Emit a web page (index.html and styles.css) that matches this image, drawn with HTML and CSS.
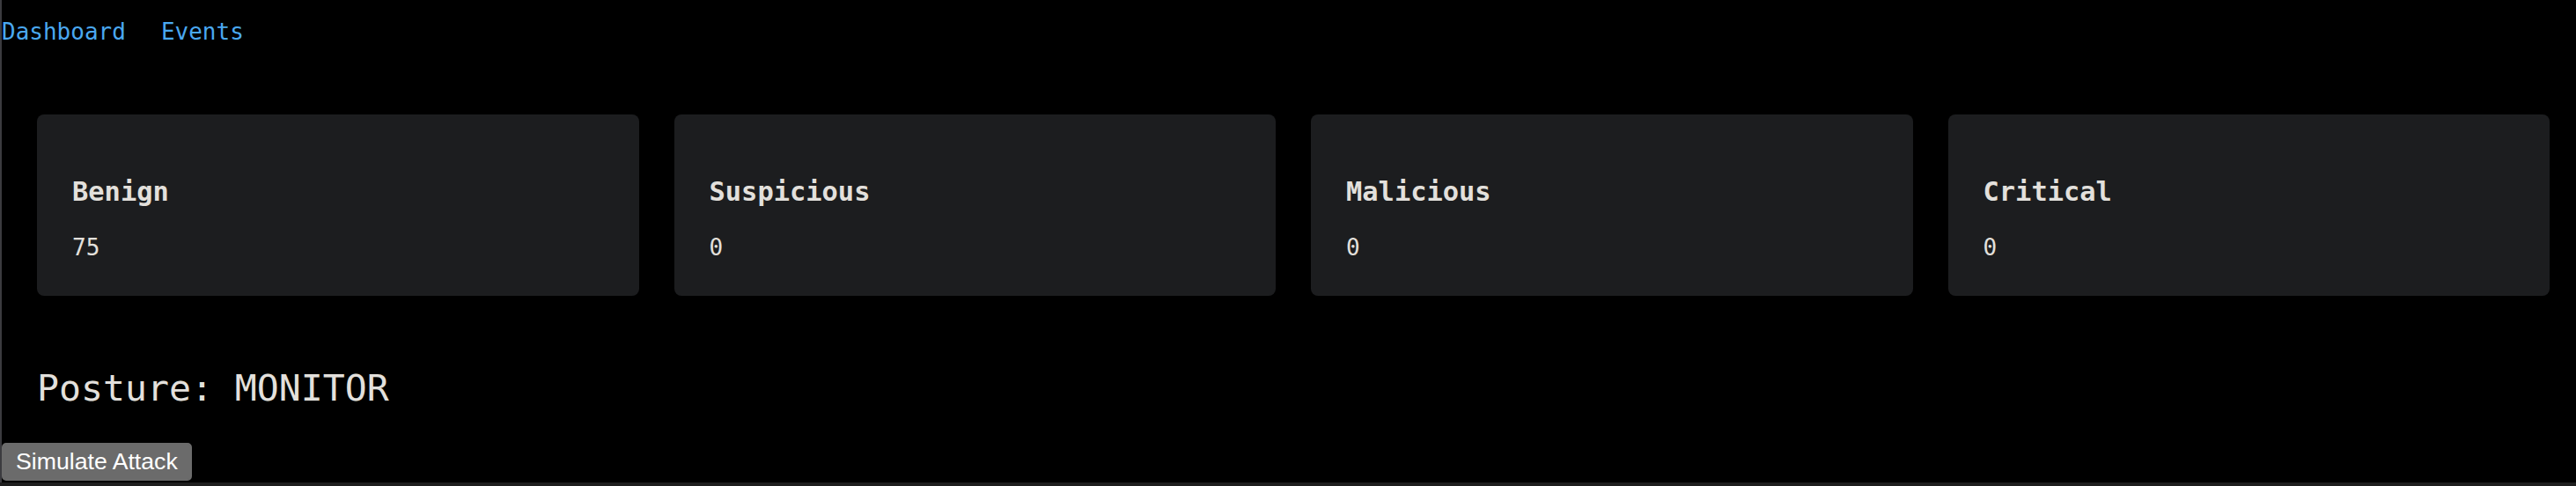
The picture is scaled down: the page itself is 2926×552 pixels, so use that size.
FILE: index.html
```html
<!DOCTYPE html>
<html lang="en">
<head>
    <meta charset="UTF-8">
    <meta name="viewport" content="width=device-width, initial-scale=1.0">
    <title>SOC Dashboard</title>
    <link rel="stylesheet" href="styles.css">
</head>
<body>
    <!-- Top links -->
    <nav class="top-nav">
        <a href="#">Dashboard</a>
        <a href="#">Events</a>
    </nav>

    <main class="dashboard">
        <!-- Severity counters -->
        <div class="cards">
            <div class="card">
                <h3>Benign</h3>
                <div class="count">75</div>
            </div>
            <div class="card">
                <h3>Suspicious</h3>
                <div class="count">0</div>
            </div>
            <div class="card">
                <h3>Malicious</h3>
                <div class="count">0</div>
            </div>
            <div class="card">
                <h3>Critical</h3>
                <div class="count">0</div>
            </div>
        </div>

        <h2 class="posture">Posture: MONITOR</h2>
    </main>

    <button id="simulate-btn" class="sim-btn">Simulate Attack</button>
</body>
</html>
```

FILE: styles.css
```css
html {
    background-color: #1e1e1e;
}

body {
    margin: 0;
    min-height: 548px;
    box-sizing: border-box;
    border-left: 2px solid #3b3b3f;
    background-color: #000;
    color: #e3e0dc;
    font-family: "DejaVu Sans Mono", monospace;
    font-size: 26px;
}

.top-nav {
    display: flex;
    gap: 40px;
    padding-top: 21px;
}

.top-nav a {
    color: #4aa8f0;
    text-decoration: none;
}

.dashboard {
    padding: 79px 30px 0 40px;
}

.cards {
    display: grid;
    grid-template-columns: repeat(4, 1fr);
    gap: 40px;
}

.card {
    background-color: #1c1d1f;
    border-radius: 8px;
    padding: 40px;
}

.card h3 {
    font-size: 30.4px;
    margin: 30.4px 0;
}

.count {
    font-size: 26px;
}

.posture {
    font-size: 41.5px;
    font-weight: normal;
    margin: 80px 0 38px;
}

.sim-btn {
    display: block;
    background-color: #6b6b6b;
    color: #fff;
    border: 2px solid #6b6b6b;
    border-radius: 5px;
    padding: 4px 14px;
    font-family: "Liberation Sans", Arial, sans-serif;
    font-size: 26.67px;
    cursor: pointer;
}
```
